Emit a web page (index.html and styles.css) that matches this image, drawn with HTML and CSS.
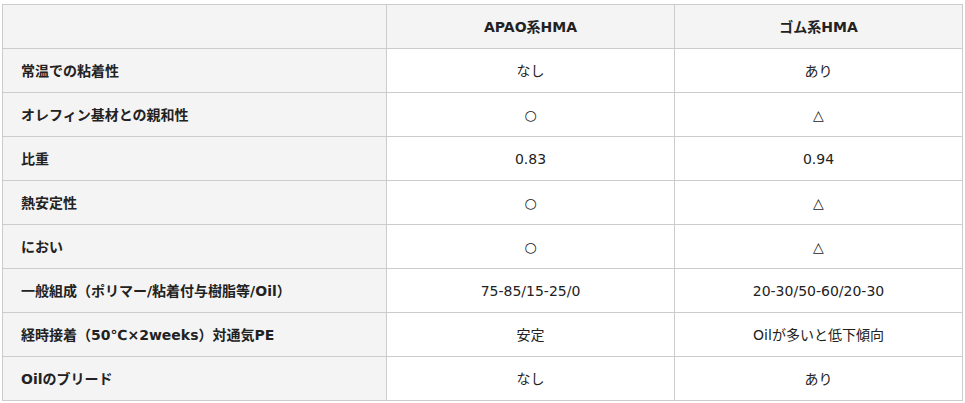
FILE: index.html
```html
<!DOCTYPE html>
<html lang="ja">
<head>
<meta charset="utf-8">
<title>APAO系HMA と ゴム系HMA の比較</title>
<link rel="stylesheet" href="styles.css">
</head>
<body>
<table class="cmp">
  <colgroup>
    <col class="c-label">
    <col class="c-val">
    <col class="c-val">
  </colgroup>
  <thead>
    <tr>
      <th class="corner"></th>
      <th>APAO系HMA</th>
      <th>ゴム系HMA</th>
    </tr>
  </thead>
  <tbody>
    <tr><th>常温での粘着性</th><td>なし</td><td>あり</td></tr>
    <tr><th>オレフィン基材との親和性</th><td>○</td><td>△</td></tr>
    <tr><th>比重</th><td>0.83</td><td>0.94</td></tr>
    <tr><th>熱安定性</th><td>○</td><td>△</td></tr>
    <tr><th>におい</th><td>○</td><td>△</td></tr>
    <tr><th>一般組成（ポリマー/粘着付与樹脂等/Oil）</th><td>75-85/15-25/0</td><td>20-30/50-60/20-30</td></tr>
    <tr><th>経時接着（50℃×2weeks）対通気PE</th><td>安定</td><td>Oilが多いと低下傾向</td></tr>
    <tr><th>Oilのブリード</th><td>なし</td><td>あり</td></tr>
  </tbody>
</table>
</body>
</html>
```
FILE: styles.css
```css
html, body {
  margin: 0;
  padding: 0;
  background: #ffffff;
}

body {
  font-family: "DejaVu Sans", "Noto Sans CJK JP", sans-serif;
  font-size: 14px;
  color: #222222;
}

.cmp {
  margin: 4px 0 0 2px;
  width: 961px;
  border-collapse: collapse;
  table-layout: fixed;
}

.c-label { width: 384px; }
.c-val { width: 288px; }

.cmp tr {
  height: 44px;
}

.cmp th,
.cmp td {
  border: 1px solid #cccccc;
  padding: 0 18px;
  vertical-align: middle;
  line-height: 20px;
}

.cmp thead th {
  background: #f4f4f4;
  font-weight: bold;
  text-align: center;
}

.cmp tbody th {
  background: #f4f4f4;
  font-weight: bold;
  text-align: left;
}

.cmp tbody td {
  background: #ffffff;
  text-align: center;
  font-weight: normal;
}
```
